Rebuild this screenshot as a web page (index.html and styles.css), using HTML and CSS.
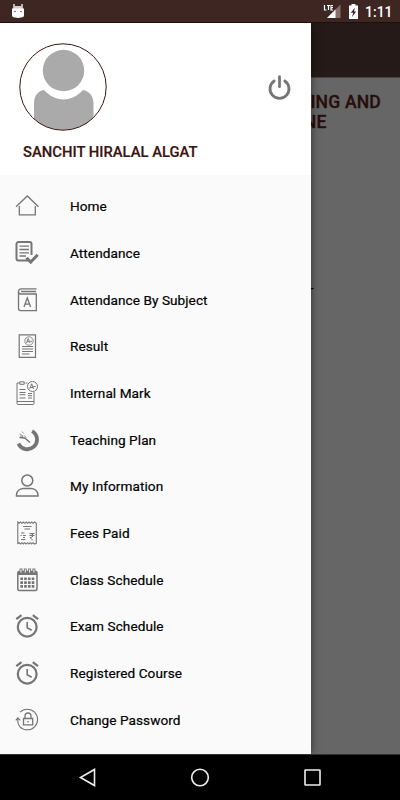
FILE: index.html
```html
<!DOCTYPE html>
<html lang="en">
<head>
<meta charset="utf-8">
<title>Student menu</title>
<link rel="stylesheet" href="styles.css">
</head>
<body>
<div class="phone">
  <header class="status">
    <svg class="robot" width="14" height="16" viewBox="0 0 14 16"><path d="M3 1v3M11 1v3" stroke="#fff" stroke-width="1.3"/><path d="M2 4.500Q3 3 4.500 3h5Q11 3 12 4.500V6H2z" fill="#d5cdcb"/><path d="M1 5.500h12v6.500q0 2.500-3 2.500L7 15 4 14.500q-3 0-3-2.500z" fill="#fff"/><circle cx="4" cy="8.500" r=".7" fill="#3e2723"/><circle cx="10" cy="8.500" r=".7" fill="#3e2723"/></svg>
    <div class="indicators">
      <svg class="signal" width="19" height="17" viewBox="0 0 19 17"><path d="M17.500 1.500V15H4z" fill="#866f6b"/><path d="M12.500 6.500V15H4z" fill="#fff"/><path d="M1.500 2v5h2M4 2.500h3M5.500 2.500V7M10 2.500H8V7h2M8 4.700h2" fill="none" stroke="#fff" stroke-width="1.200"/></svg>
      <svg class="battery" width="11" height="17" viewBox="0 0 11 17"><path d="M3.500 1h4v1.500H10V16H1V2.500h2.500z" fill="#fff"/><path d="M7 4.500 2.800 9.700h2.400L4 14l4.300-5.400H6z" fill="#3e2723"/></svg>
      <span class="clock">1:11</span>
    </div>
  </header>
  <main class="screen">
    <section class="page">
      <div class="toolbar"></div>
      <h1 class="course"><span>ENGINEERING AND</span><span class="second">MACHINE</span></h1>
      <p class="dash">-</p>
    </section>
    <aside class="drawer">
      <div class="profile">
        <div class="profile-row">
          <svg class="avatar" width="88" height="88" viewBox="0 0 88 88"><defs><clipPath id="round"><circle cx="44" cy="44" r="43"/></clipPath></defs><circle cx="44" cy="44" r="43.300" fill="#fff"/><g clip-path="url(#round)" fill="#aaa"><circle cx="44.500" cy="27.500" r="20.700"/><path d="M25 47C31 53 37 56.500 44.500 56.500S58 53 64 47C70 48 74.500 53 74.500 60V88H15V60C15 53 19 48 25 47z"/></g><circle cx="44" cy="44" r="43.200" fill="none" stroke="#3b1512"/></svg>
          <svg class="power" width="24" height="26" viewBox="0 0 24 26"><path d="M6.200 7a9.500 9.500 0 1 0 10.600 0M11.500 2.700v10" fill="none" stroke="#757575" stroke-width="2.800" stroke-linecap="round"/></svg>
        </div>
        <h2 class="name">SANCHIT HIRALAL ALGAT</h2>
      </div>
      <nav>
        <ul class="menu">
          <li><svg viewBox="0 0 24 24"><path d="M1 12.800 12.300 2 23.500 12.800M4.300 12v8.800h16V12" stroke-width="1.300"/></svg><span>Home</span></li>
          <li><svg viewBox="0 0 24 24"><path d="M14 19.500H3.500a2 2 0 0 1-2-2V3a2 2 0 0 1 2-2h11a2 2 0 0 1 2 2v11" stroke-width="2"/><path d="M4.500 5.200h9.500M4.500 8.500h9.500M4.500 11.800h9.500M4.500 15h6.500" stroke-width="1.300"/><path d="m11.500 16.800 4.200 4.300 7-7.300" stroke-width="3"/></svg><span>Attendance</span></li>
          <li><svg viewBox="0 0 24 24"><path d="M21.500.9H6a2.600 2.600 0 0 0-2.500 2.700v17A2 2 0 0 0 5.500 22.600h15.800V6H6a2.400 2.400 0 0 1-2.500-2.400M6 3.500h15" stroke-width="1.300"/><path d="m9 19 3.300-9 3.300 9M10 16.200h4.600" stroke-width="1.300"/></svg><span>Attendance By Subject</span></li>
          <li><svg viewBox="0 0 24 24"><path d="M4.200.8h16.300v22.500H4.200z" stroke-width="1.200"/><circle cx="14" cy="7" r="4.200" stroke-width=".8"/><path d="m11.500 9 1.700-4.500L15 9M12 7.700h2.300M15.200 7.300h2" stroke-width=".9"/><path d="M7 12.500h11M7 15h11M7 17.500h11M7 20h7.500" stroke-width="1"/></svg><span>Result</span></li>
          <li><svg viewBox="0 0 24 24"><path d="M4.800 2H2v20.500q0 1 1 1h15q1 0 1-1V11M12.500 2h-2M2 20.500h17M4.800.8h4.400v2.500H4.800z" stroke-width="1"/><circle cx="17.500" cy="5.500" r="5" stroke-width="1"/><path d="m14.700 7.800 2-5L18.500 8M15.300 6.500H18M18.300 5.500h2.400M4.500 8.500h6M4.500 11.500h6M4.500 13.700h6M4.500 17h6M13 12.500h4M13 14.700h4M13 17h4" stroke-width="1"/></svg><span>Internal Mark</span></li>
          <li><svg viewBox="0 0 24 24"><path d="M17.100 3.100A9.700 9.700 0 1 1 3.500 15.600" stroke-width="3.800"/><path d="m15 14.500-5.200-4.500L4.500 9.500" stroke-width="1.500"/><path d="m4.500 6 4 2M7 3.500l1.500 2M9 7.500l2.500 2M5 8l3 .5" stroke-width=".7"/></svg><span>Teaching Plan</span></li>
          <li><svg viewBox="0 0 24 24"><circle cx="12.300" cy="6.500" r="5.500" stroke-width="1.500"/><path d="M1.500 22v-1.300c.3-4.200 4-6.200 7-6.200h7.500c3 0 6.700 2 7 6.200V22z" stroke-width="1.500"/></svg><span>My Information</span></li>
          <li><svg viewBox="0 0 24 24"><path d="m2.800 1 1.300 1.300L5.500 1l1.400 1.300L8.300 1l1.400 1.300L11.100 1l1.400 1.300L13.900 1l1.400 1.300L16.700 1l1.400 1.300L19.500 1l1.800 1.300v20L19.500 23l-1.400-1.300-1.400 1.300-1.400-1.300-1.400 1.300-1.400-1.300-1.400 1.300-1.400-1.300L8.300 23l-1.400-1.300L5.500 23l-1.400-1.300L2.800 22.500z" stroke-width="1.100"/><path d="M8 5.500h8.500M9.500 8h5.500M6 12h3.500M5.500 14.500h1.300M8 14.500h3M6 18.500h4.500M8 16.500h2" stroke-width="1"/><path d="M14.500 12.500h5M14.500 14.500h5M15 12.500q3 0 3 2t-3 2l3 3" stroke-width="1"/></svg><span>Fees Paid</span></li>
          <li><svg viewBox="0 0 24 24"><rect x="2.800" y="3.500" width="19.200" height="19" rx="1.500" stroke-width="1.500"/><path d="M3 5.500h19" stroke-width="3"/><path d="M6 5V.5M10.300 5V.5M14.600 5V.5M18.900 5V.5" stroke-width="3"/><path d="M6 4.500V1.300M10.300 4.500V1.300M14.600 4.500V1.300M18.900 4.500V1.300" stroke="#fafafa" stroke-width="1"/><path d="M5.300 10.800h14M5.300 14.600h14M5.300 18.400h14" stroke-width="2.600" stroke-dasharray="2.700 1.100"/></svg><span>Class Schedule</span></li>
          <li><svg viewBox="0 0 24 24"><circle cx="12.200" cy="13.200" r="9.400" stroke-width="2.200"/><path d="M12.200 7.900v5.800l4.500 2.600" stroke-width="1.600"/><path d="m1.300 5.200 5.200-4M17.800 1.200l5.200 4" stroke-width="2.200"/></svg><span>Exam Schedule</span></li>
          <li><svg viewBox="0 0 24 24"><circle cx="12.200" cy="13.200" r="9.400" stroke-width="2.200"/><path d="M12.200 7.900v5.800l4.500 2.600" stroke-width="1.600"/><path d="m1.300 5.200 5.200-4M17.800 1.200l5.200 4" stroke-width="2.200"/></svg><span>Registered Course</span></li>
          <li><svg viewBox="0 0 24 24"><path d="M5 4.200A10.300 10.300 0 1 1 5 18.800Q2.300 15.500 2.800 10M.8 12.300 2.800 9.800l2.500 2.500" stroke-width="1.100"/><path d="M8.500 10.500h9.200v6.300H8.500zM10 10.500V8a3 3 0 0 1 6 0v2.500M13 13v1.500" stroke-width="1.300"/></svg><span>Change Password</span></li>
        </ul>
      </nav>
    </aside>
  </main>
  <footer class="navbar">
    <svg width="20" height="20" viewBox="0 0 20 20"><path d="M17.500 1.500v16L3.500 9.500z"/></svg>
    <svg width="20" height="20" viewBox="0 0 20 20"><circle cx="10" cy="9.500" r="8.300"/></svg>
    <svg width="20" height="20" viewBox="0 0 20 20"><rect x="2" y="2" width="15" height="15" rx=".5"/></svg>
  </footer>
</div>
</body>
</html>
```
FILE: styles.css
```css
* { box-sizing: border-box; }
body { margin: 0; font-family: Roboto, "Liberation Sans", sans-serif; }
h1, h2, p, ul { margin: 0; padding: 0; }
.phone { width: 400px; height: 800px; display: flex; flex-direction: column; overflow: hidden; background: #000; }
.status { height: 23px; flex: none; display: flex; justify-content: space-between; padding: 3px 8px 0 11px; background: #3e2723; border-bottom: 1px solid #1c100e; }
.indicators { display: flex; align-items: flex-start; }
.battery { margin-left: 6px; }
.clock { margin-left: 6px; color: #fff; font-size: 14px; font-weight: 500; line-height: 19px; width: 27px; white-space: nowrap; }
.screen { height: 731px; flex: none; display: grid; overflow: hidden; }
.page, .drawer { grid-area: 1 / 1; }
.page { background: #666; }
.toolbar { height: 55px; background: #251a17; border-bottom: 1px solid #49413f; }
.course { display: flex; flex-direction: column; align-items: flex-end; padding: 14px 19px 0 0; color: #260e0c; font-size: 17.6px; line-height: 20px; font-weight: 500; letter-spacing: .15px; -webkit-text-stroke: .3px; }
.second { margin-right: 54.5px; }
.dash { margin: 146px 0 0 309px; font-size: 17px; line-height: 20px; }
.drawer { width: 311px; background: #fafafa; box-shadow: 0 0 8px rgba(0, 0, 0, .55); z-index: 1; }
.profile { height: 152px; background: #fff; padding: 20px 19px 0; }
.profile-row { display: flex; justify-content: space-between; align-items: center; height: 88px; }
.name { margin: 12px 0 0 4px; color: #3b1512; font-size: 14.8px; line-height: 18px; font-weight: 500; white-space: nowrap; -webkit-text-stroke: .2px; }
.menu { list-style: none; padding-top: 8px; }
.menu li { height: 46.67px; display: flex; align-items: center; padding-left: 15px; font-size: 13.6px; font-weight: 400; letter-spacing: .07px; color: #000; -webkit-text-stroke: .2px; }
.menu svg { width: 24px; height: 24px; margin-right: 31px; flex: none; fill: none; stroke: #757575; }
.navbar { flex: 1; display: flex; justify-content: space-between; align-items: center; padding: 0 77px; background: #000; border-top: 1px solid #333; }
.navbar svg { fill: none; stroke: #eee; stroke-width: 1.6; }
```
